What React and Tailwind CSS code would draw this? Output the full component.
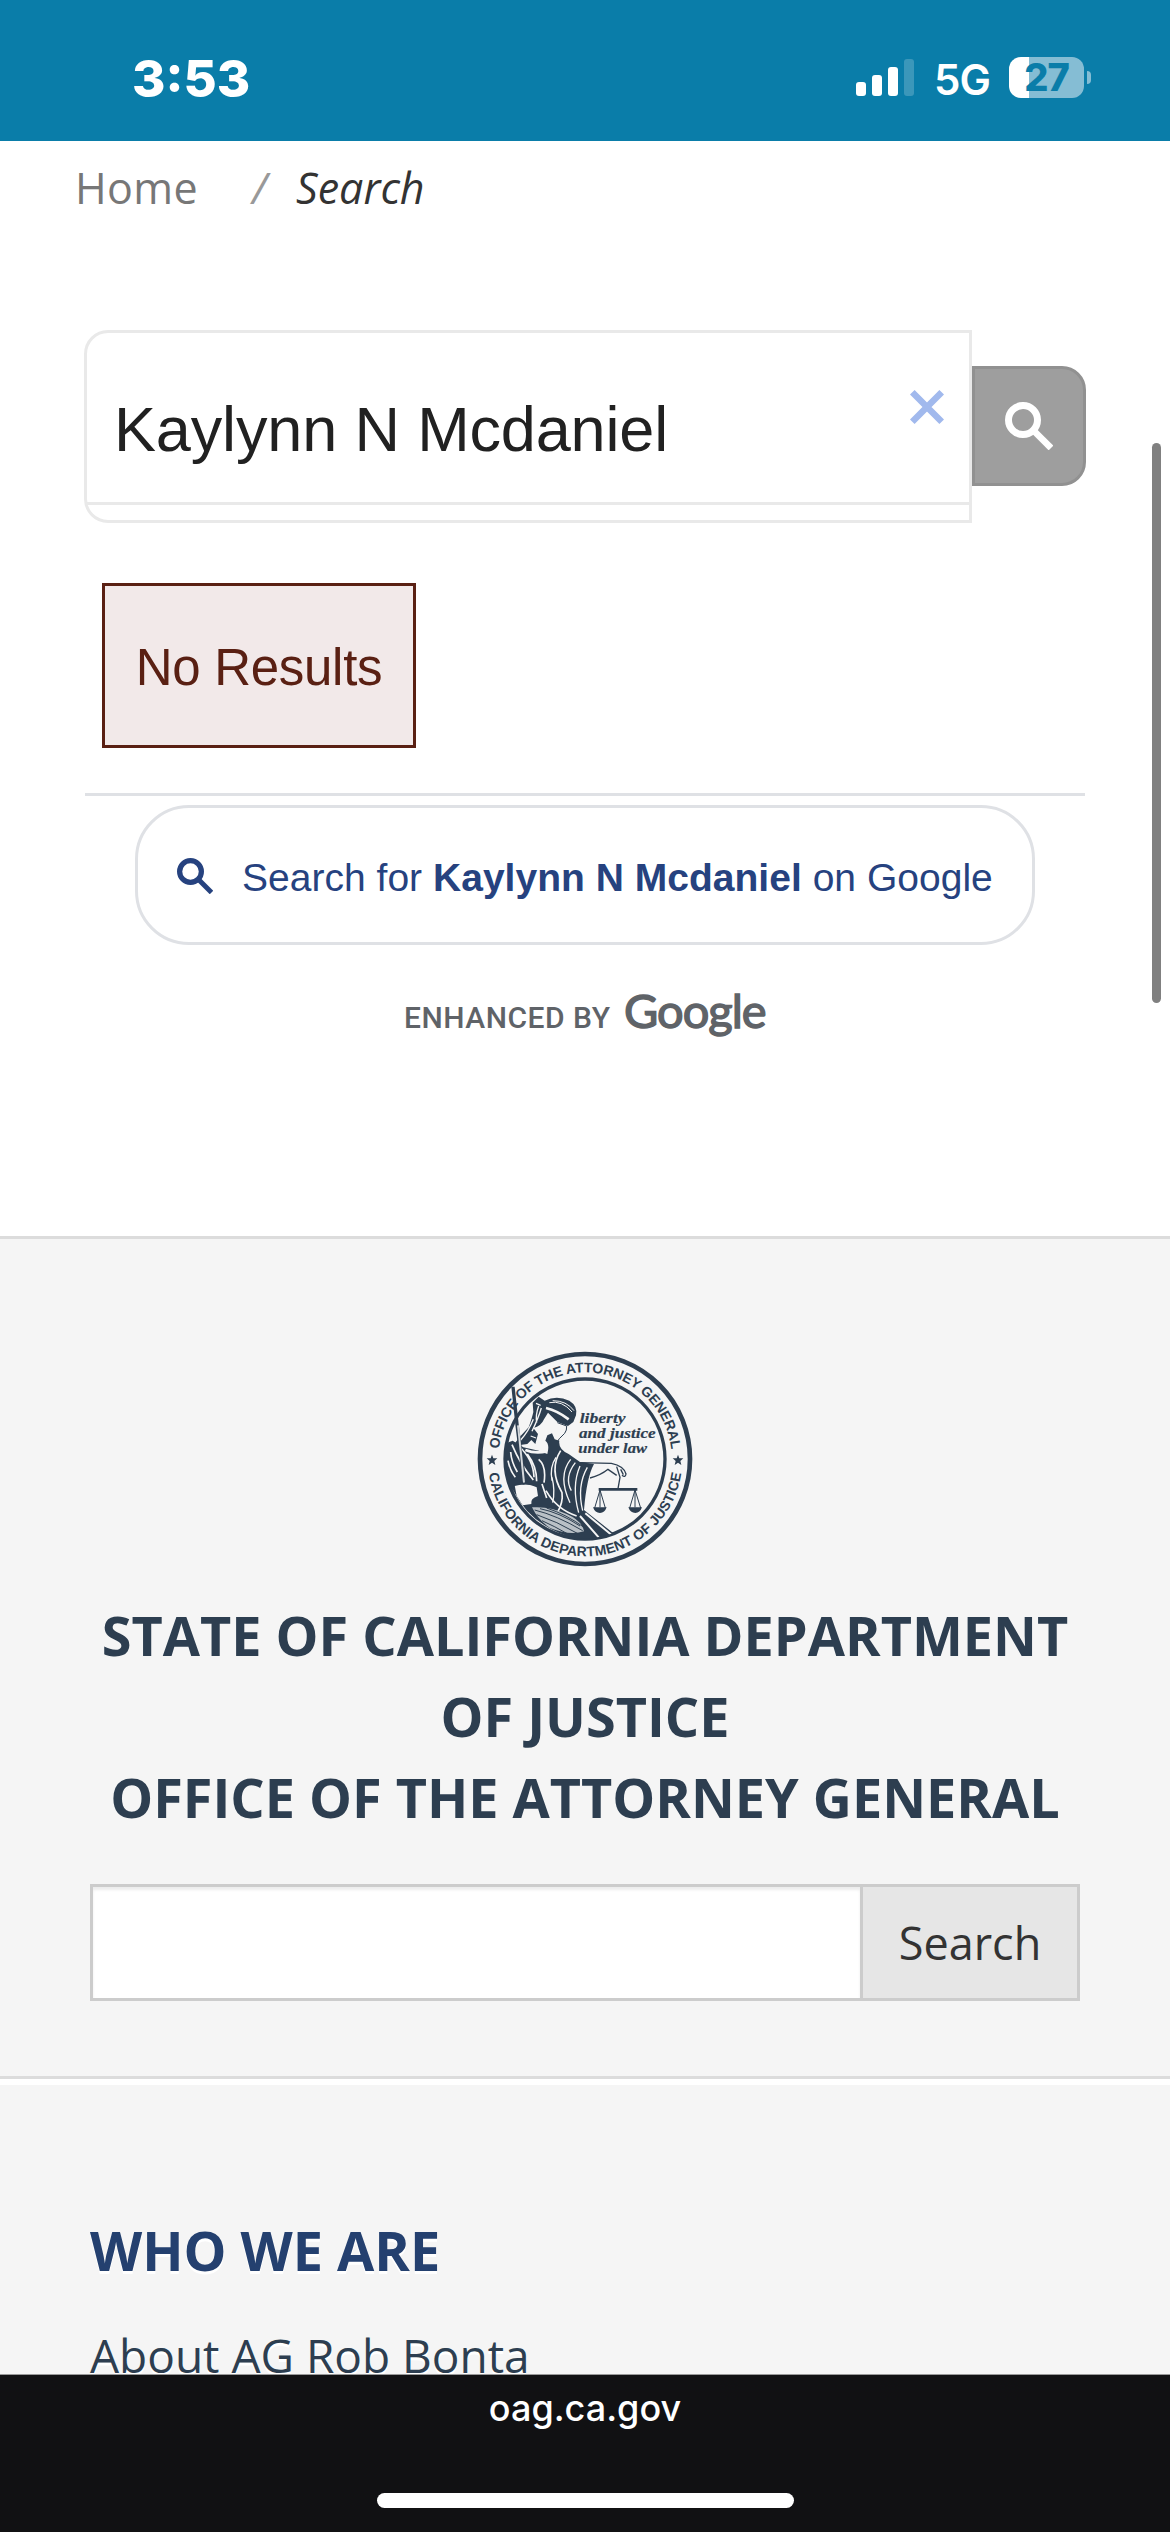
const HELV = "font-['Liberation_Sans',sans-serif]";

function StatusBar() {
  return (
    <div className="flex h-[141px] shrink-0 bg-[#0a7da9] pl-[132px] pr-[79px] pt-[57px] font-['Inter',sans-serif] text-white">
      <div className="h-[42px] text-[51px] leading-[43px] font-extrabold">3:53</div>
      <div className="ml-auto flex h-[42px] items-start">
        <div className="flex h-[39px] items-end gap-[6px]">
          <i className="h-[14px] w-[10px] rounded-[3px] bg-white" />
          <i className="h-[21px] w-[10px] rounded-[3px] bg-white" />
          <i className="h-[29px] w-[10px] rounded-[3px] bg-white" />
          <i className="h-[37px] w-[10px] rounded-[3px] bg-white/20" />
        </div>
        <div className="ml-[20px] w-[59px] text-[42px] leading-[45px] font-semibold tracking-[-0.8px]">5G</div>
        <div className="ml-[16px] flex h-[41px] w-[75px] items-center justify-center rounded-[12px] bg-[linear-gradient(90deg,#fff_20px,#85bdd4_20px)] text-[38px] leading-[41px] font-extrabold tracking-[-1px] text-[#0a7da9]">
          27
        </div>
        <i className="mt-[14px] ml-[3px] h-[13px] w-[4px] rounded-r-full bg-[#85bdd4]" />
      </div>
    </div>
  );
}

function Magnifier({ className }) {
  return (
    <svg viewBox="0 0 48 48" className={className} fill="none" stroke="currentColor">
      <circle cx="18" cy="18" r="14.5" strokeWidth="7" />
      <path d="M30 30 L46 46" strokeWidth="6.6" />
    </svg>
  );
}

function Seal() {
  return (
    <svg viewBox="0 0 690 690" className="h-[230px] w-[230px]" fill="#2d3e50" stroke="#2d3e50">
      <defs>
        <path id="arcTop" d="M85 345 A260 260 0 0 1 605 345" />
        <path id="arcBottom" d="M53 345 A292 292 0 0 0 637 345" />
        <clipPath id="disc"><circle cx="345" cy="345" r="238" /></clipPath>
      </defs>
      <circle cx="345" cy="345" r="315" fill="none" strokeWidth="14" />
      <circle cx="345" cy="345" r="240" fill="none" strokeWidth="10" />
      <g stroke="none" fontFamily="Liberation Sans" fontWeight="700" fontSize="42">
        <text><textPath href="#arcTop" startOffset="30" textLength="758">OFFICE OF THE ATTORNEY GENERAL</textPath></text>
        <text><textPath href="#arcBottom" startOffset="44" textLength="830">CALIFORNIA DEPARTMENT OF JUSTICE</textPath></text>
      </g>
      <g stroke="none">
        <path d="M66 332 l4 11 12 0 -9 8 3 12 -10 -7 -10 7 3 -12 -9 -8 12 0z" />
        <path d="M624 332 l4 11 12 0 -9 8 3 12 -10 -7 -10 7 3 -12 -9 -8 12 0z" />
      </g>
      <g strokeWidth="0.6" fontFamily="Liberation Serif" fontStyle="italic" fontWeight="700" fontSize="46">
        <text x="329" y="236" textLength="138" lengthAdjust="spacingAndGlyphs">liberty</text>
        <text x="327" y="282" textLength="230" lengthAdjust="spacingAndGlyphs">and justice</text>
        <text x="325" y="328" textLength="206" lengthAdjust="spacingAndGlyphs">under law</text>
      </g>
      <g clipPath="url(#disc)">
        {/* hair, braid and blindfold */}
        <path stroke="none" d="M188 176 L206 158 L224 170 Q260 152 298 170 Q324 186 318 214 L310 234 L294 246 L262 234 L234 206 L222 226 Q214 246 190 252 L204 270 L196 300 L184 288 L172 300 L128 306 Q150 276 176 250 Q186 222 190 204z" />
        <g fill="none" stroke="#f5f5f5" strokeWidth="4">
          <path d="M228 192 Q262 200 296 226" strokeWidth="8" />
          <path d="M238 176 Q276 168 306 204 M248 170 Q290 170 312 200" strokeWidth="3" />
          <path d="M206 186 Q196 214 200 236 M198 178 L212 184 M214 192 Q206 220 186 262 M190 226 Q176 262 152 288" />
          <path d="M182 276 L198 282" />
        </g>
        <path d="M262 236 L290 246 L289 258 L284 268 L268 284 L260 296" fill="none" strokeWidth="3" />
        {/* robe */}
        <path stroke="none" d="M232 274 L246 268 L254 286 L268 290 Q264 316 296 330 L330 354 L372 360 Q350 400 342 498 L436 572 L345 590 Q190 560 130 440 L104 400 L104 300 L128 290 L160 310 L206 320 L232 330 Q240 300 226 290z" />
        <g fill="none" stroke="#f5f5f5" strokeWidth="5">
          <path d="M166 318 Q196 330 230 322" strokeWidth="8" />
          <path d="M126 302 Q150 360 190 408 M146 306 Q190 346 192 400 M172 330 Q200 366 200 412" />
          <path d="M206 346 Q230 366 222 416 M122 324 Q124 354 142 384 M114 350 Q120 380 136 400" />
          <path d="M272 320 Q236 376 276 446 Q280 476 262 506" />
          <path d="M258 340 Q238 370 246 410 M246 400 Q256 440 248 476 M302 346 Q262 396 300 476" strokeWidth="4" />
          <path d="M330 366 Q304 426 326 506 M352 370 Q320 426 338 500 M316 356 Q282 400 304 440" strokeWidth="4" />
          <path d="M228 440 Q260 496 320 516 M216 420 L230 462" />
          <path d="M346 508 L424 572 M330 516 L386 580" strokeWidth="6" />
        </g>
        <path d="M134 424 Q160 412 200 430 L204 456 Q180 464 184 480 L158 484 L140 456z" fill="#f5f5f5" stroke="none" />
        <path d="M186 490 Q240 486 290 510 Q336 530 342 562 Q300 576 240 552 Q204 528 186 490z" fill="#b9c0c6" stroke="none" />
        <g fill="none" strokeWidth="3">
          <path d="M194 498 Q260 514 338 560 M200 512 Q260 532 322 568 M230 492 Q290 512 342 550 M216 530 Q256 548 290 568 M210 494 Q270 506 330 546" />
        </g>
      </g>
      {/* sword */}
      <path d="M124 128 L134 128 L146 240 L170 420 L158 422 L136 242z" stroke="none" />
      <path d="M144 244 L162 416" stroke="#d5d9dc" strokeWidth="6" />
      <path d="M130 424 Q164 414 204 424" fill="none" strokeWidth="5" />
      {/* arm and scales */}
      <g fill="none" strokeWidth="4">
        <path d="M330 356 L424 358 Q462 366 468 390 Q466 402 456 394 M360 402 Q392 394 414 376 L440 394 M440 368 L450 400 L444 434 M452 376 L460 392" />
        <path d="M386 436 L502 436" strokeWidth="8" />
        <path d="M390 438 L374 492 M390 438 L406 492 M390 438 L390 490 M495 438 L479 492 M495 438 L512 492 M495 438 L495 490" strokeWidth="3" />
      </g>
      <path d="M369 490 H410 Q404 507 390 507 Q375 507 369 490z M475 490 H516 Q510 507 496 507 Q481 507 475 490z" stroke="none" />
    </svg>
  );
}

export default function App() {
  return (
    <div className="relative flex h-[2532px] w-[1170px] flex-col overflow-hidden bg-white font-['Open_Sans',sans-serif]">
      <StatusBar />

      <main className="flex h-[1095px] shrink-0 flex-col">
        <nav className="mt-[17px] flex h-[60px] pl-[75px] text-[43px] leading-[60px]">
          <span className="w-[177px] tracking-[0.4px] text-[#777]">Home</span>
          <span className="w-[44px] text-[#999] italic">/</span>
          <span className="text-[#333] italic">Search</span>
        </nav>

        <form className="mt-[112px] ml-[84px] flex h-[193px] items-start">
          <div className="h-[193px] w-[888px] rounded-l-[24px] border-[3px] border-[#e9e9e9]">
            <div className={`flex h-[172px] border-b-[3px] border-[#e9e9e9] pr-[25px] pl-[27px] ${HELV}`}>
              <span className="mt-[60px] text-[63px] leading-[72px] tracking-[-0.15px] whitespace-nowrap text-[#212121]">Kaylynn N Mcdaniel</span>
              <svg viewBox="0 0 34 34" className="mt-[57px] ml-auto h-[34px] w-[34px]" stroke="#a1b9ed" strokeWidth="6.5">
                <path d="M2.3 2.3 L31.7 31.7 M31.7 2.3 L2.3 31.7" />
              </svg>
            </div>
          </div>
          <div className="mt-[36px] h-[120px] w-[114px] rounded-r-[24px] border-[3px] border-[#919191] bg-[#9e9e9e] pt-[33px] pl-[30px] text-white">
            <Magnifier className="h-[48px] w-[48px]" />
          </div>
        </form>

        <div className={`mt-[60px] ml-[102px] h-[165px] w-[314px] border-[3px] border-[#5a2013] bg-[#f2e9e9] pt-[52px] text-center text-[51px] leading-[60px] tracking-[-0.3px] text-[#5a2013] ${HELV}`}>
          No Results
        </div>

        <div className="mt-[45px] ml-[85px] h-[3px] w-[1000px] bg-[#dfe1e5]" />
        <div className={`mt-[9px] ml-[135px] flex h-[140px] w-[900px] rounded-[54px] border-[3px] border-[#dfe1e5] pl-[39px] text-[#26427f] ${HELV}`}>
          <Magnifier className="mt-[50px] h-[36px] w-[36px]" />
          <div className="mt-[47px] ml-[29px] h-[46px] text-[39px] leading-[46px] tracking-[0.02px] whitespace-nowrap">
            Search for <b>Kaylynn N Mcdaniel</b> on Google
          </div>
        </div>

        <div className="mt-[35px] ml-[404px] flex items-baseline text-[#5f6368]">
          <span className="w-[220px] font-['Roboto',sans-serif] text-[30px] leading-[60px] font-medium tracking-[0.5px] whitespace-nowrap">ENHANCED BY</span>
          <span className="font-['Lato',sans-serif] text-[47px] leading-[60px] tracking-[-1px] [-webkit-text-stroke:1.4px_#5f6368]">Google</span>
        </div>
      </main>

      <footer className="flex h-[1138px] shrink-0 flex-col text-[#2d3e50]">
        <section className="flex h-[843px] shrink-0 flex-col items-center border-y-[3px] border-[#dcdcdc] bg-[#f5f5f5] pt-[105px]">
          <Seal />
          <h2 className="mt-[21px] text-center text-[54px] leading-[81px] font-bold whitespace-nowrap">
            STATE OF CALIFORNIA DEPARTMENT<br />OF JUSTICE<br />OFFICE OF THE ATTORNEY GENERAL
          </h2>
          <form className="mt-[46px] flex h-[117px] w-[990px] border-[3px] border-[#ccc] bg-white">
            <div className="h-[111px] w-[767px] shadow-[inset_0_3px_3px_rgba(0,0,0,0.075)]" />
            <div className="flex-1 border-l-[3px] border-[#ccc] bg-[#e6e6e6] text-center text-[45px] leading-[111px] text-[#333]">Search</div>
          </form>
        </section>
        <section className="mt-[6px] flex-1 overflow-hidden bg-[#f5f5f5] pl-[90px] [text-shadow:0_3px_0_#fff]">
          <h3 className="mt-[128px] text-[54px] leading-[74px] font-bold text-[#24406f]">WHO WE ARE</h3>
          <p className="mt-[37px] text-[46px] leading-[62px]">About AG Rob Bonta</p>
        </section>
      </footer>

      <div className="flex h-[158px] shrink-0 flex-col items-center border-t border-[#999] bg-[#111113] text-white">
        <div className="mt-[11px] font-['Inter',sans-serif] text-[36px] leading-[44px] font-medium">oag.ca.gov</div>
        <div className="mt-[63px] h-[15px] w-[417px] rounded-full bg-white" />
      </div>

      <div className="absolute top-[443px] left-[1152px] h-[560px] w-[9px] rounded-full bg-[#808080]" />
    </div>
  );
}
